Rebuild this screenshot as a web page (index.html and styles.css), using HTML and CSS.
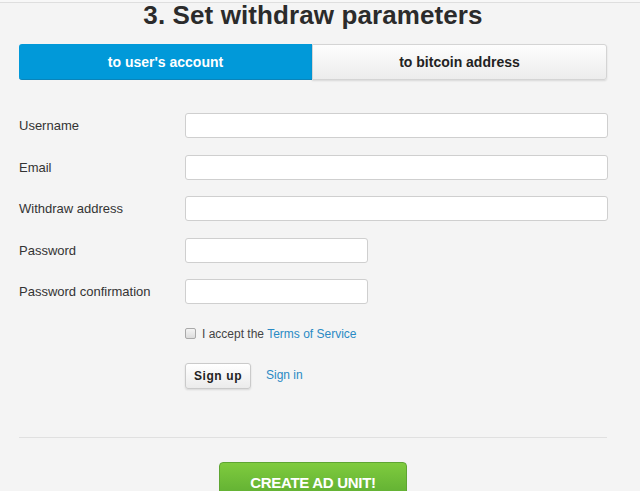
FILE: index.html
```html
<!DOCTYPE html>
<html>
<head>
<meta charset="utf-8">
<link rel="stylesheet" href="styles.css">
</head>
<body>
<div class="topline"></div>
<div class="page">
  <h1 class="title">3. Set withdraw parameters</h1>
  <div class="tabs">
    <div class="tab tab-active">to user's account</div>
    <div class="tab tab-plain">to bitcoin address</div>
  </div>
  <form class="form">
    <label class="label">Username</label>
    <input class="input input-wide" type="text">
    <label class="label">Email</label>
    <input class="input input-wide" type="text">
    <label class="label">Withdraw address</label>
    <input class="input input-wide" type="text">
    <label class="label">Password</label>
    <input class="input input-short" type="password">
    <label class="label">Password confirmation</label>
    <input class="input input-short" type="password">
    <div class="check-row">
      <span class="checkbox"></span>
      <span class="check-text">I accept the <a class="link">Terms of Service</a></span>
    </div>
    <div class="actions">
      <span class="btn-signup">Sign up</span>
      <a class="link signin">Sign in</a>
    </div>
  </form>
  <div class="rule"></div>
  <div class="create-wrap">
    <span class="btn-create">CREATE AD UNIT!</span>
  </div>
</div>
</body>
</html>
```
FILE: styles.css
```css
html, body {
  margin: 0;
  padding: 0;
  background: #f4f4f4;
  font-family: "Liberation Sans", Arial, sans-serif;
  color: #333;
  overflow: hidden;
}
.topline {
  height: 2px;
  background: #f7f7f7;
  border-bottom: 1px solid #dedede;
}
.page {
  padding: 0 33px 0 19px;
}
.title {
  margin: -2px 0 0 0;
  height: 43px;
  font-size: 26px;
  line-height: 28px;
  font-weight: bold;
  color: #2b2b2b;
  text-align: center;
  letter-spacing: 0.1px;
}
.tabs {
  display: flex;
  height: 36px;
}
.tab {
  flex: 1;
  display: flex;
  align-items: center;
  justify-content: center;
  font-size: 14px;
  font-weight: bold;
}
.tab-active {
  background: #0199d9;
  color: #fff;
  border-radius: 3px 0 0 3px;
  border-bottom: 1px solid #0a84ba;
}
.tab-plain {
  background: linear-gradient(#fdfdfd, #ececec);
  color: #222;
  border: 1px solid #d4d4d4;
  border-radius: 0 3px 3px 0;
  box-shadow: 0 1px 2px rgba(0,0,0,0.12);
}
.form {
  display: grid;
  grid-template-columns: 166px 1fr;
  row-gap: 16.5px;
  margin-top: 33px;
}
.label {
  display: flex;
  align-items: center;
  height: 25px;
  font-size: 13px;
  color: #333;
}
.input {
  box-sizing: border-box;
  height: 25px;
  margin: 0;
  padding: 0 6px;
  background: #fff;
  border: 1px solid #cfcfcf;
  border-radius: 3px;
  font-family: inherit;
  font-size: 13px;
}
.input-wide { width: 423px; }
.input-short { width: 183px; }
.check-row {
  grid-column: 2;
  display: flex;
  align-items: center;
  height: 20px;
  margin-top: 3px;
}
.checkbox {
  box-sizing: border-box;
  width: 11px;
  height: 11px;
  border: 1px solid #a9a9a9;
  border-radius: 2px;
  background: linear-gradient(#f4f4f4, #dcdcdc);
  margin-right: 6px;
}
.check-text {
  font-size: 12px;
  color: #444;
}
.link {
  color: #2a8ac4;
  text-decoration: none;
}
.actions {
  grid-column: 2;
  display: flex;
  align-items: center;
  margin-top: 3px;
}
.btn-signup {
  box-sizing: border-box;
  width: 66px;
  height: 26px;
  display: flex;
  align-items: center;
  justify-content: center;
  font-size: 12px;
  font-weight: bold;
  letter-spacing: 0.6px;
  color: #222;
  background: linear-gradient(#ffffff, #ebebeb);
  border: 1px solid #cacaca;
  border-radius: 3px;
  box-shadow: 0 1px 2px rgba(0,0,0,0.12);
}
.signin {
  font-size: 12px;
  margin-left: 15px;
  margin-top: -2px;
}
.rule {
  height: 1px;
  background: #e0e0e0;
  margin-top: 48px;
}
.create-wrap {
  display: flex;
  justify-content: center;
  margin-top: 24px;
}
.btn-create {
  box-sizing: border-box;
  width: 188px;
  height: 36px;
  padding-top: 12px;
  text-align: center;
  font-size: 15px;
  line-height: 15px;
  font-weight: bold;
  letter-spacing: -0.3px;
  color: #fff;
  background: linear-gradient(#7fcb3e, #5fae32);
  border: 1px solid #5ea532;
  border-radius: 4px;
}
```
